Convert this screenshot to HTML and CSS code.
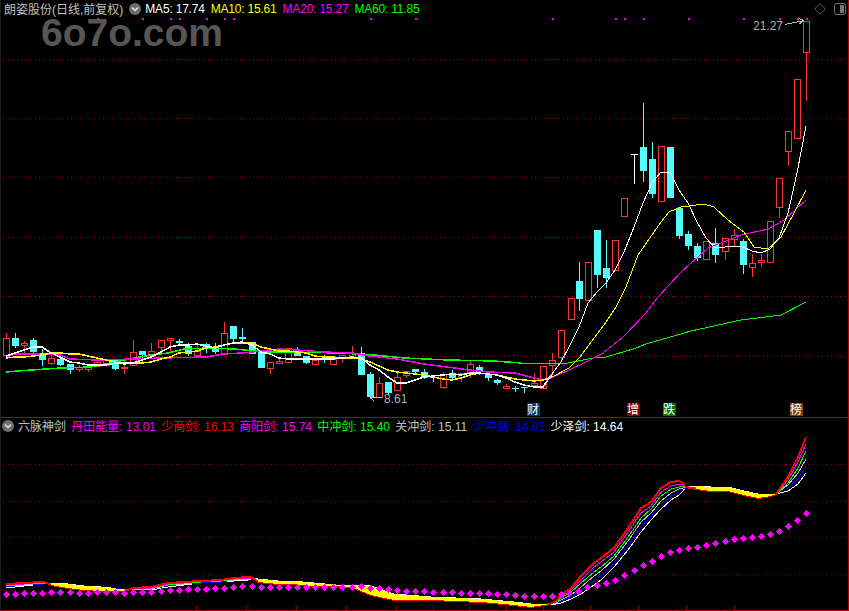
FILE: index.html
```html
<!DOCTYPE html>
<html lang="zh-CN">
<head>
<meta charset="utf-8">
<title>朗姿股份 K线</title>
<link rel="stylesheet" href="styles.css">
</head>
<body>
<main class="terminal">
  <section class="panel panel-main">
    <svg id="main-chart" class="plot" viewBox="0 0 847 417" width="847" height="417"></svg>
    <div class="watermark">6o7o.com</div>
    <header class="legend">
      <span class="name">朗姿股份(日线,前复权)</span>
      <svg class="chev" viewBox="0 0 12 12" width="12" height="12"><circle cx="6" cy="6" r="6" fill="#6e6e6e"/><path d="M3 4.5 L6 7.5 L9 4.5" fill="none" stroke="#e8e8e8" stroke-width="1.5"/></svg>
      <span class="white gap-ma">MA5: 17.74</span>
      <span class="yellow gap-ma">MA10: 15.61</span>
      <span class="magenta gap-ma">MA20: 15.27</span>
      <span class="green gap-ma">MA60: 11.85</span>
    </header>
    <div class="tools">
      <svg viewBox="0 0 12 12" width="12" height="12"><path d="M6 .7 L11.3 6 L6 11.3 L.7 6 Z" fill="none" stroke="#5a5a5a"/></svg>
      <svg viewBox="0 0 12 12" width="12" height="12"><rect x=".5" y=".5" width="11" height="11" rx="2" fill="none" stroke="#777"/><rect x="6" y="2" width="4" height="8" fill="#777"/></svg>
    </div>
  </section>
  <section class="panel panel-sub">
    <svg id="sub-chart" class="plot" viewBox="0 418 847 192" width="847" height="192"></svg>
    <header class="legend legend-sub">
      <svg class="chev" viewBox="0 0 12 12" width="12" height="12"><circle cx="6" cy="6" r="6" fill="#6e6e6e"/><path d="M3 4.5 L6 7.5 L9 4.5" fill="none" stroke="#e8e8e8" stroke-width="1.5"/></svg>
      <span class="name">六脉神剑</span>
      <span class="magenta">丹田能量: 13.01</span>
      <span class="red">少商剑: 16.13</span>
      <span class="magenta">商阳剑: 15.74</span>
      <span class="green">中冲剑: 15.40</span>
      <span class="grey">关冲剑: 15.11</span>
      <span class="blue">少冲剑: 14.85</span>
      <span class="white">少泽剑: 14.64</span>
    </header>
  </section>
</main>
<script src="chart.js"></script>
</body>
</html>
```
FILE: styles.css
```css
html, body {
  margin: 0;
  padding: 0;
  background: #000;
}

.terminal {
  display: flex;
  flex-direction: column;
  width: 847px;
  height: 610px;
  border-left: 1px solid #1c1c1c;
  border-right: 1px solid #b00000;
  border-bottom: 1px solid #a80000;
  font: 12px "Liberation Sans", "Noto Sans CJK SC", sans-serif;
  color: #c0c0c0;
}

.panel {
  position: relative;
  overflow: hidden;
}

.panel-main {
  height: 417px;
  border-bottom: 1px solid #b00000;
}

.panel-sub {
  flex: 1;
}

.plot {
  display: block;
  background: #000;
}

.legend {
  position: absolute;
  top: 1px;
  left: 3px;
  display: flex;
  align-items: center;
  height: 15px;
  white-space: nowrap;
}

.legend-sub {
  left: 1px;
  top: 0;
  gap: 5.3px;
}

.legend-sub .chev {
  margin-right: -1.3px;
}

.chev {
  flex: none;
}

.legend .name + .chev {
  margin-left: 6px;
}

.gap-ma {
  margin-left: 6px;
  letter-spacing: -.2px;
}

.legend .chev + .gap-ma {
  margin-left: 4px;
}

.white { color: #fff; }
.yellow { color: #ff0; }
.magenta { color: #f0f; }
.green { color: #0f0; }
.red { color: #f00; }
.grey { color: #c0c0c0; }
.blue { color: #0000f0; }

.watermark {
  position: absolute;
  top: 18px;
  left: 40px;
  font: bold 39px "Liberation Sans", sans-serif;
  color: #565656;
  line-height: 30px;
}

.tools {
  position: absolute;
  top: 3px;
  right: 2px;
  display: flex;
  gap: 8px;
}

.tools svg {
  display: block;
}

.plot text {
  font: 12px "Liberation Sans", "Noto Sans CJK SC", sans-serif;
}
```
FILE: chart.js
```js
var RED = '#ff3232', CYAN = '#54fcfc';

var candles = [
[5,'r',338,355,333,355],[14,'c',338,345,333,347],[23,'r',343,345,341,353],[32,'c',340,351,338,353],
[41,'c',353,359,349,365],[50,'r',358,363,353,364],[59,'c',359,364,355,365],[69,'c',364,369,364,373],
[78,'r',367,369,365,371],[87,'r',367,369,367,371],[96,'r',362,366,362,366],[105,'r',360,365,360,365],
[114,'c',360,368,360,369],[123,'r',367,368,360,373],[132,'r',352,365,340,365],[141,'c',351,354,351,363],
[150,'r',351,358,343,358],[160,'r',340,347,340,353],[169,'r',338,340,338,352],[178,'c',341,342,339,344],
[187,'c',346,353,343,355],[196,'r',351,355,343,355],[205,'c',344,348,343,352],[214,'c',348,351,343,353],
[223,'r',333,354,322,354],[232,'c',326,338,326,341],[241,'c',337,338,328,342],[251,'c',342,353,342,353],
[260,'c',352,367,352,367],[269,'r',362,368,362,373],[278,'r',361,363,357,363],[287,'r',348,362,348,362],
[296,'c',351,355,347,355],[305,'c',356,362,356,363],[314,'r',360,364,360,364],[323,'c',358,358,355,362],
[332,'r',359,364,356,364],[341,'r',355,357,355,362],[351,'r',353,357,346,357],[360,'c',353,374,347,374],
[369,'c',374,396,372,396],[378,'r',383,397,377,397],[387,'c',382,392,382,394],[396,'r',377,390,373,390],
[405,'r',371,375,371,377],[414,'c',369,371,369,374],[423,'c',372,377,369,378],[432,'c',377,377,375,381],
[442,'r',374,387,372,387],[451,'c',373,377,370,379],[460,'r',373,377,373,381],[469,'r',364,372,361,377],
[478,'c',367,371,365,374],[487,'c',374,377,374,380],[496,'c',380,382,379,384],[505,'r',386,388,384,388],
[514,'c',388,388,386,391],[523,'c',387,387,387,392],[533,'r',383,385,373,385],[542,'r',366,388,366,388],
[551,'r',360,365,353,370],[560,'r',330,357,330,360],[570,'r',298,319,298,319],[578,'c',281,298,262,310],
[587,'r',262,300,262,300],[596,'c',230,274,230,287],[605,'c',268,277,240,287],[614,'r',240,270,240,270],
[623,'r',198,216,198,216],[633,'w',154,184,154,184],[642,'c',147,170,103,181],[651,'c',159,193,142,197],
[660,'r',146,201,146,201],[669,'c',147,197,147,197],[678,'c',208,235,208,238],[687,'c',234,245,231,249],
[696,'c',246,257,243,260],[705,'r',241,259,241,259],[714,'c',243,254,228,262],[724,'r',238,251,238,259],
[733,'r',235,239,229,245],[742,'c',241,264,239,273],[751,'r',263,267,254,276],[760,'r',260,262,254,266],
[769,'r',221,262,221,262],[778,'r',178,207,178,217],[787,'r',131,151,131,165],[796,'r',79,138,79,138],
[805,'r',21,52,21,100]
];

var ma5 = [[5,356],[14,353],[32,347],[41,347],[50,353],[59,357],[69,362],[78,363],[87,365],[96,365],[105,365],[114,363],[123,363],[132,363],[141,360],[150,357],[160,352],[169,347],[178,345],[187,345],[196,344],[205,346],[214,348],[223,345],[232,343],[241,342],[251,345],[260,352],[269,354],[278,358],[287,359],[296,359],[314,359],[332,359],[351,357],[360,358],[369,365],[378,370],[387,377],[396,383],[405,383],[414,380],[423,377],[432,376],[442,375],[451,374],[460,375],[469,373],[478,373],[487,374],[496,375],[505,378],[514,382],[523,385],[533,387],[542,387],[551,374],[560,362],[569,345],[578,327],[587,303],[596,292],[605,283],[614,270],[623,252],[633,227],[642,203],[651,183],[660,172],[669,172],[678,190],[687,203],[696,222],[705,238],[714,248],[724,247],[733,246],[742,247],[751,251],[760,253],[769,249],[778,238],[787,213],[796,173],[805,126]];

var ma10 = [[5,358],[14,357],[23,357],[32,356],[41,355],[50,353],[59,353],[69,354],[78,354],[87,356],[96,358],[105,360],[114,362],[123,364],[132,363],[141,363],[150,362],[160,359],[169,357],[178,353],[187,352],[196,351],[205,348],[214,347],[223,345],[232,343],[241,343],[251,343],[260,347],[269,349],[278,351],[287,351],[296,352],[305,353],[314,356],[323,357],[332,357],[341,358],[351,358],[360,359],[369,362],[378,366],[387,370],[396,372],[405,373],[414,374],[423,375],[432,377],[442,379],[451,380],[460,378],[469,375],[478,373],[487,374],[496,375],[505,377],[514,379],[523,380],[533,381],[542,380],[551,377],[568,368],[578,358],[588,345],[603,325],[615,307],[625,287],[637,255],[660,222],[668,212],[680,207],[703,204],[713,207],[727,220],[743,232],[753,247],[767,249],[780,237],[793,213],[805,190]];

var ma20 = [[5,357],[14,354],[32,354],[59,355],[69,359],[96,360],[132,359],[160,358],[205,357],[223,354],[241,353],[278,349],[296,350],[323,352],[351,353],[369,356],[396,359],[423,364],[469,370],[487,372],[514,373],[533,378],[542,380],[552,377],[568,370],[585,362],[602,353],[622,337],[645,313],[657,297],[680,272],[707,248],[740,235],[767,229],[783,220],[805,200]];

var ma60 = [[5,372],[30,370],[60,368],[90,367],[133,358],[150,355],[167,353],[183,349],[207,348],[233,349],[263,352],[290,352],[337,353],[373,355],[403,358],[447,360],[493,361],[520,363],[567,363],[592,358],[605,357],[622,352],[635,348],[645,344],[690,331],[740,320],[780,315],[805,302]];

var bundle = [[5,584,588],[23,583,586],[42,582,584],[46,583,583],[50,585,583],[67,588,584],[83,590,586],[100,591,587],[120,591,589],[127,590,590],[132,588,589],[150,587,590],[167,583,587],[183,582,585],[200,581,583],[220,580,582],[233,578,581],[247,577,580],[252,578,578],[257,582,579],[277,584,581],[290,584,581],[313,586,583],[335,586,585],[353,588,585],[370,595,586],[393,600,594],[430,600,597],[480,602,599],[513,605,602],[530,607,604],[543,605,604],[549,604,604],[555,601,604],[560,595,603],[570,588,599],[580,576,594],[593,563,585],[600,558,580],[613,548,567],[627,528,550],[640,508,532],[650,502,520],[660,488,509],[670,482,500],[678,481,495],[682,483,491],[685,487,487],[695,489,486],[710,491,487],[727,491,487],[743,495,491],[757,498,494],[770,496,494],[775,494,494],[787,477,491],[797,457,484],[805,437,473]];

var dots = [[5,594],[14,594],[23,593],[32,593],[41,593],[50,592],[59,592],[69,592],[78,593],[87,593],[96,592],[105,592],[114,592],[123,593],[132,592],[141,592],[150,592],[160,591],[169,590],[178,590],[187,589],[196,589],[205,589],[214,588],[223,588],[232,587],[241,586],[251,586],[260,587],[269,587],[278,587],[287,587],[296,587],[305,587],[314,587],[323,587],[332,587],[341,587],[351,587],[360,586],[369,588],[378,588],[387,589],[396,590],[405,591],[414,591],[423,591],[432,592],[442,592],[451,592],[460,593],[469,593],[478,593],[487,593],[496,594],[505,594],[514,595],[523,596],[533,596],[542,596],[551,596],[560,594],[568,593],[577,591],[586,587],[596,585],[605,583],[614,580],[623,575],[633,570],[642,565],[651,561],[660,556],[669,552],[678,550],[687,548],[696,547],[705,545],[714,543],[724,541],[733,539],[742,538],[751,537],[760,536],[769,534],[778,531],[787,526],[796,520],[805,513]];

function pts(a) {
  return a.map(function (p) { return p[0] + ',' + p[1]; }).join(' ');
}
function line(a, color, w) {
  return '<polyline points="' + pts(a) + '" fill="none" stroke="' + color + '" stroke-width="' + w + '" stroke-linejoin="round"/>';
}
/* Moving averages read heavier over the flat left part of the chart. */
function maLine(a, color) {
  var left = a.filter(function (p) { return p[0] <= 552; });
  var right = a.filter(function (p) { return p[0] >= left[left.length - 1][0]; });
  return line(left, color, 1.5) + line(right, color, 1);
}
function grid(y, color) {
  return '<line x1="2" x2="846" y1="' + (y + .5) + '" y2="' + (y + .5) + '" stroke="' + color + '" stroke-dasharray="1 3.55"/>';
}
function seg(x1, y1, x2, y2, color) {
  return '<line x1="' + x1 + '" y1="' + y1 + '" x2="' + x2 + '" y2="' + y2 + '" stroke="' + color + '"/>';
}

function candle(c) {
  var x = c[0], t = c[1], top = c[2], bot = c[3], wt = c[4], wb = c[5], m = x + .5, out = '';
  if (t === 'w') {
    return seg(m, 154, m, 184, '#fff') + seg(x - 3, 154.5, x + 4, 154.5, '#fff');
  }
  var col = t === 'r' ? RED : CYAN;
  if (wt < top) out += seg(m, wt, m, top, col);
  if (wb > bot) out += seg(m, bot, m, wb + 1, col);
  if (bot === top) return out + seg(x - 3, top + .5, x + 4, top + .5, col);
  if (t === 'r') {
    out += '<rect x="' + (x - 3 + .5) + '" y="' + (top + .5) + '" width="6" height="' + (bot - top) + '" fill="#000" stroke="' + col + '"/>';
  } else {
    out += '<rect x="' + (x - 3) + '" y="' + top + '" width="7" height="' + (bot - top + 1) + '" fill="' + col + '"/>';
  }
  return out;
}

function tag(x, text, bg) {
  return '<rect x="' + x + '" y="403" width="13" height="13" fill="' + bg + '"/><text x="' + x + '" y="414" fill="#fff">' + text + '</text>';
}

/* main panel */
var m = '<g shape-rendering="crispEdges">';
[59, 118, 177, 237, 296, 356].forEach(function (y) { m += grid(y, '#c00000'); });
[96,141,169,178,205,223,232,369,414,551,614,623,642,687,742,778,796,805].forEach(function (x) {
  m += '<rect x="' + x + '" y="18" width="2" height="2" fill="#f0f"/>';
});
candles.forEach(function (c) { m += candle(c); });
m += maLine(ma60, '#00ff00') + maLine(ma20, '#ff00ff') + maLine(ma10, '#ffff00') + maLine(ma5, '#ffffff');
m += seg(784, 24.5, 803, 20.5, '#b8b8b8') + seg(798, 18.5, 803, 20.5, '#b8b8b8') + seg(798, 24, 803, 20.5, '#b8b8b8');
m += seg(369, 397.5, 382, 397.5, '#b8b8b8') + seg(369, 397.5, 373, 394, '#b8b8b8') + seg(369, 397.5, 373, 401, '#b8b8b8');
m += '</g>';
m += '<text x="752" y="30" fill="#b0b0b0">21.27</text><text x="383" y="403" fill="#b0b0b0">8.61</text>';
m += tag(526, '财', '#003a70') + tag(626, '增', '#800000') + tag(662, '跌', '#007000') + tag(789, '榜', '#804010');
document.getElementById('main-chart').innerHTML = m;

/* sub panel */
var s = '<g shape-rendering="crispEdges">';
[464, 501, 537, 574].forEach(function (y) { s += grid(y, '#a00000'); });
[195,245,295,345,395,432,468,505,542,589,637,685,733].forEach(function (x) {
  s += seg(x + .5, 606, x + .5, 610, '#a00000');
});

function fan(f) {
  return bundle.map(function (b) { return [b[0], Math.round(b[1] + (b[2] - b[1]) * f)]; });
}
var runs = [], cur = null;
bundle.forEach(function (b) {
  var inv = b[1] > b[2];
  if (inv) {
    if (!cur) { cur = []; runs.push(cur); }
    cur.push(b);
  } else if (cur) {
    cur.push(b); cur = null;
  }
});
var colors = ['#fff', '#0000ff', '#c0c0c0', '#00ff00', '#ff00ff'];
var fr = [1, .8, .6, .4, .2];
colors.forEach(function (c, i) { s += line(fan(fr[i]), c, 1); });
s += line(fan(0), '#ff0000', 2);
runs.forEach(function (r) {
  var top = r.map(function (b) { return b[0] + ',' + b[2]; });
  var bot = r.map(function (b) { return b[0] + ',' + b[1]; }).reverse();
  s += '<polygon points="' + top.concat(bot).join(' ') + '" fill="#ffff00"/>';
});
dots.forEach(function (d) {
  var x = d[0] + .5, y = d[1] + .5, r = 3.7;
  s += '<polygon points="' + x + ',' + (y - r) + ' ' + (x + r) + ',' + y + ' ' + x + ',' + (y + r) + ' ' + (x - r) + ',' + y + '" fill="#ff00ff"/>';
});
s += '</g>';
document.getElementById('sub-chart').innerHTML = s;
```
